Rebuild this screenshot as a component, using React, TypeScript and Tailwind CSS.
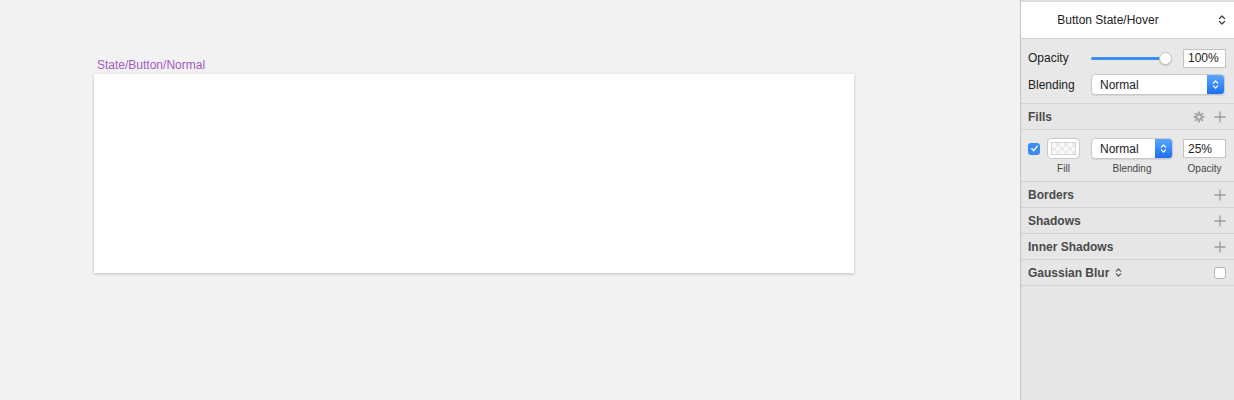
import React from "react";

const font = { fontFamily: '"Liberation Sans", Arial, sans-serif' };

function UpDown({ className = "", color = "currentColor" }: { className?: string; color?: string }) {
  return (
    <svg viewBox="0 0 8 12" className={className} fill="none" stroke={color} strokeWidth="1.4" strokeLinecap="round" strokeLinejoin="round">
      <path d="M1.5 4.5 L4 2 L6.5 4.5" />
      <path d="M1.5 7.5 L4 10 L6.5 7.5" />
    </svg>
  );
}

function Plus() {
  return (
    <svg viewBox="0 0 12 12" className="w-[12px] h-[12px]" stroke="#9a9a9a" strokeWidth="1.3">
      <path d="M6 0.5 V11.5 M0.5 6 H11.5" />
    </svg>
  );
}

function Gear() {
  const teeth = [0, 45, 90, 135, 180, 225, 270, 315];
  return (
    <svg viewBox="0 0 12 12" className="w-[12px] h-[12px]">
      {teeth.map((a) => (
        <rect key={a} x="5" y="0.5" width="2" height="3" fill="#a8a8a8" transform={`rotate(${a} 6 6)`} />
      ))}
      <circle cx="6" cy="6" r="3.6" fill="#a8a8a8" />
      <circle cx="6" cy="6" r="1.5" fill="#e8e8e8" />
    </svg>
  );
}

function BlueSelect({ width, label }: { width: string; label: string }) {
  return (
    <div className={`flex h-[21px] ${width} rounded-[4px] bg-white border border-[#c9c9c9] shadow-[0_1px_1px_rgba(0,0,0,0.08)] overflow-hidden`}>
      <div className="flex-1 flex items-center pl-[8px] text-[12px] text-[#222]">{label}</div>
      <div className="w-[17px] flex items-center justify-center bg-gradient-to-b from-[#5aa5fb] to-[#1b6ef3]">
        <UpDown className="w-[7px] h-[11px]" color="white" />
      </div>
    </div>
  );
}

function SectionRow({ title, extra, right }: { title: string; extra?: React.ReactNode; right: React.ReactNode }) {
  return (
    <div className="h-[26px] flex items-center justify-between pl-[7px] pr-[8px] border-b border-[#d3d3d3]">
      <div className="flex items-center gap-[6px] text-[12px] font-bold text-[#4a4a4a]">
        {title}
        {extra}
      </div>
      {right}
    </div>
  );
}

export default function App() {
  return (
    <div className="flex w-[1234px] h-[400px] overflow-hidden" style={font}>
      <div className="w-[1020px] h-full bg-[#f2f2f2] pl-[94px] pt-[56px]">
        <div className="ml-[3px] text-[12px] leading-[18px] text-[#a35bc4]">State/Button/Normal</div>
        <div className="w-[760px] h-[199px] bg-white shadow-[0_1px_3px_rgba(0,0,0,0.22)]" />
      </div>
      <div className="w-[214px] h-full bg-[#e6e6e6] border-l border-[#c4c4c4] flex flex-col">
        <div className="h-[39px] bg-white border-t-[2px] border-[#dedede] border-b border-b-[#d3d3d3] flex items-center relative">
          <div className="flex-1 text-center text-[12px] text-[#222] pr-[39px]">Button State/Hover</div>
          <UpDown className="absolute right-[8px] top-[12px] w-[8px] h-[12px]" color="#444" />
        </div>
        <div className="bg-[#e8e8e8] border-b border-[#d3d3d3] pt-[9px] pb-[8px] pl-[7px] pr-[8px] flex flex-col gap-[6px]">
          <div className="flex items-center h-[20px]">
            <div className="w-[63px] text-[12px] text-[#222]">Opacity</div>
            <div className="relative w-[82px] h-[13px] flex items-center">
              <div className="w-[74px] h-[3px] rounded-full bg-[#3d8ef5]" />
              <div className="absolute left-[68px] top-0 w-[13px] h-[13px] rounded-full bg-white border border-[#c2c2c2] shadow-[0_1px_1px_rgba(0,0,0,0.15)]" />
            </div>
            <div className="ml-auto w-[43px] h-[19px] bg-white border border-[#c4c4c4] flex items-center pl-[4px] text-[12px] text-[#222]">100%</div>
          </div>
          <div className="flex items-center h-[21px]">
            <div className="w-[63px] text-[12px] text-[#222]">Blending</div>
            <BlueSelect width="w-[134px]" label="Normal" />
          </div>
        </div>
        <SectionRow
          title="Fills"
          right={
            <div className="flex items-center gap-[9px]">
              <Gear />
              <Plus />
            </div>
          }
        />
        <div className="bg-[#e8e8e8] border-b border-[#d3d3d3] pl-[7px] pr-[8px] pt-[8px] pb-[6px]">
          <div className="flex items-center h-[21px]">
            <div className="w-[12px] h-[12px] rounded-[3px] bg-[#3a8cf5] flex items-center justify-center">
              <svg viewBox="0 0 10 10" className="w-[9px] h-[9px]" fill="none" stroke="white" strokeWidth="1.6" strokeLinecap="round" strokeLinejoin="round">
                <path d="M2 5.2 L4.2 7.4 L8 2.6" />
              </svg>
            </div>
            <div className="ml-[7px] w-[33px] h-[21px] rounded-[4px] bg-white border border-[#c9c9c9] flex items-center justify-center">
              <div
                className="w-[25px] h-[13px] border border-[#d6d6d6]"
                style={{
                  backgroundColor: "#fafafa",
                  backgroundImage:
                    "linear-gradient(45deg,#ebebeb 25%,transparent 25%,transparent 75%,#ebebeb 75%),linear-gradient(45deg,#ebebeb 25%,transparent 25%,transparent 75%,#ebebeb 75%)",
                  backgroundSize: "8px 8px",
                  backgroundPosition: "0 0,4px 4px",
                }}
              />
            </div>
            <div className="ml-[11px]">
              <BlueSelect width="w-[82px]" label="Normal" />
            </div>
            <div className="ml-auto w-[43px] h-[19px] bg-white border border-[#c4c4c4] flex items-center pl-[4px] text-[12px] text-[#222]">25%</div>
          </div>
          <div className="flex text-[10px] text-[#444] mt-[4px] leading-[12px]">
            <div className="w-[12px]" />
            <div className="ml-[7px] w-[33px] text-center">Fill</div>
            <div className="ml-[11px] w-[82px] text-center">Blending</div>
            <div className="ml-auto w-[43px] text-center">Opacity</div>
          </div>
        </div>
        <SectionRow title="Borders" right={<Plus />} />
        <SectionRow title="Shadows" right={<Plus />} />
        <SectionRow title="Inner Shadows" right={<Plus />} />
        <SectionRow
          title="Gaussian Blur"
          extra={<UpDown className="w-[7px] h-[11px]" color="#555" />}
          right={<div className="w-[12px] h-[12px] rounded-[3px] bg-white border border-[#b5b5b5]" />}
        />
        <div className="flex-1 bg-[#e5e5e5]" />
      </div>
    </div>
  );
}
